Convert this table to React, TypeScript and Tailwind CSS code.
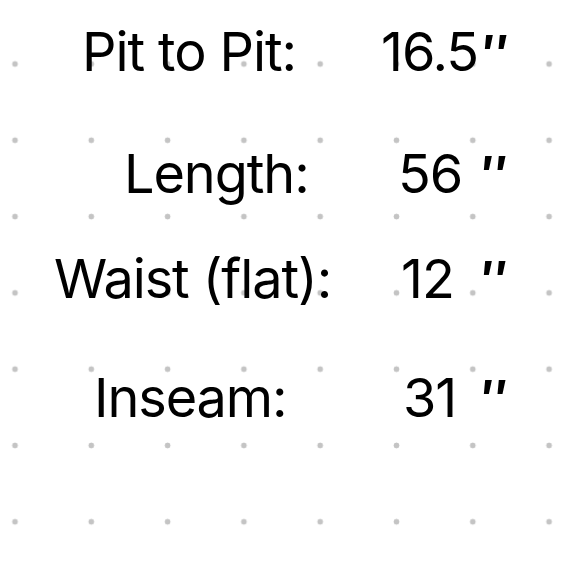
const rows = [
    { label: "Pit to Pit:", pad: "pl-[82px]", col: "w-[381px]", num: "16.5", top: "mt-[25px]", quote: false },
    { label: "Length:", pad: "pl-[124px]", col: "w-[398px]", num: "56", top: "mt-[67px]", quote: true },
    { label: "Waist (flat):", pad: "pl-[54px]", col: "w-[401px]", num: "12", top: "mt-[51px]", quote: true },
    { label: "Inseam:", pad: "pl-[94px]", col: "w-[403px]", num: "31", top: "mt-[65px]", quote: true },
];

const numCols: Record<string, string> = {
    "56": "w-[83px]",
    "12": "w-[80px]",
    "31": "w-[78px]",
};

export default function App() {
    return (
        <div className="w-[580px] h-[580px] overflow-hidden bg-white bg-[radial-gradient(circle,#c4c4c4_2.6px,transparent_3.2px)] bg-[size:76.3px_76.3px] bg-[position:-23.15px_25.85px] font-['Inter',sans-serif] text-black text-[54px] leading-[54px] tracking-[-0.02em]">
            {rows.map((r) => (
                <div key={r.label} className={`flex whitespace-pre ${r.top}`}>
                    <div className={`shrink-0 ${r.col} ${r.pad}`}>{r.label}</div>
                    {r.quote ? (
                        <>
                            <div className={`shrink-0 ${numCols[r.num]}`}>{r.num}</div>
                            <div className="font-bold text-[50px]">″</div>
                        </>
                    ) : (
                        <div>
                            {r.num}
                            <span className="font-bold text-[50px] ml-[4px]">″</span>
                        </div>
                    )}
                </div>
            ))}
        </div>
    );
}
